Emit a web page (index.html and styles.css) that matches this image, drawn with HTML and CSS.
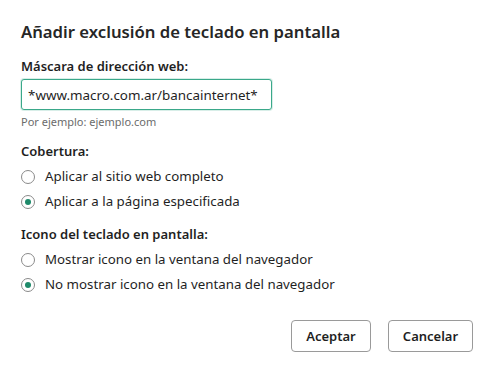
FILE: index.html
```html
<!DOCTYPE html>
<html>

<head>
  <title>Añadir exclusión</title>
  <link rel="stylesheet" href="styles.css">
</head>

<body>
  <div class="dialog">
    <h1 class="title">Añadir exclusión de teclado en pantalla</h1>

    <div class="field">
      <label class="label" for="mask">Máscara de dirección web:</label>
      <input type="text" id="mask" class="text-input" value="*www.macro.com.ar/bancainternet*">
      <div class="hint">Por ejemplo: ejemplo.com</div>
    </div>

    <div class="group">
      <div class="label">Cobertura:</div>
      <label class="radio"><span class="dot"></span>Aplicar al sitio web completo</label>
      <label class="radio checked"><span class="dot"></span>Aplicar a la página especificada</label>
    </div>

    <div class="group">
      <div class="label">Icono del teclado en pantalla:</div>
      <label class="radio"><span class="dot"></span>Mostrar icono en la ventana del navegador</label>
      <label class="radio checked"><span class="dot"></span>No mostrar icono en la ventana del navegador</label>
    </div>

    <div class="actions">
      <button class="button button-ok">Aceptar</button>
      <button class="button button-cancel">Cancelar</button>
    </div>
  </div>
</body>

</html>
```

FILE: styles.css
```css
body {
  margin: 0;
  background-color: #fff;
  font-family: "Noto Sans", "Open Sans", sans-serif;
  color: #1f1f1f;
}

.dialog {
  width: 484px;
  height: 368px;
  box-sizing: border-box;
  padding: 20px 11px 0 21px;
  display: flex;
  flex-direction: column;
}

.title {
  margin: 0 0 13px;
  font-size: 16.7px;
  font-weight: 600;
  line-height: 24px;
  color: #262626;
}

.label {
  display: block;
  font-size: 13px;
  font-weight: 600;
  line-height: 18px;
  margin-bottom: 4px;
}

.text-input {
  display: block;
  width: 251px;
  height: 31px;
  box-sizing: border-box;
  border: 1px solid #3aa88a;
  border-radius: 3px;
  padding: 0 6px;
  font-family: inherit;
  font-size: 13.4px;
  color: #1f1f1f;
  box-shadow: 0 0 0 1px rgba(58, 168, 138, 0.2);
}

.hint {
  margin-top: 4px;
  font-size: 11px;
  line-height: 16px;
  color: #6b6b6b;
}

.group {
  margin-top: 12px;
}

.group + .group {
  margin-top: 11px;
}

.radio {
  display: flex;
  align-items: center;
  font-size: 13.3px;
  line-height: 25px;
}

.dot {
  width: 14px;
  height: 14px;
  box-sizing: border-box;
  border: 1px solid #8a8a8a;
  border-radius: 50%;
  margin-right: 10px;
  position: relative;
}

.radio.checked .dot::after {
  content: "";
  position: absolute;
  left: 3px;
  top: 3px;
  width: 6px;
  height: 6px;
  border-radius: 50%;
  background-color: #1e8a6a;
}

.actions {
  margin-top: auto;
  margin-bottom: 16px;
  display: flex;
  justify-content: flex-end;
  gap: 17px;
}

.button {
  height: 32px;
  padding: 0;
  background-color: #fff;
  border: 1px solid #9a9a9a;
  border-radius: 4px;
  font-family: inherit;
  font-size: 13px;
  font-weight: 600;
  color: #1f1f1f;
}

.button-ok {
  width: 80px;
}

.button-cancel {
  width: 85px;
}
```
